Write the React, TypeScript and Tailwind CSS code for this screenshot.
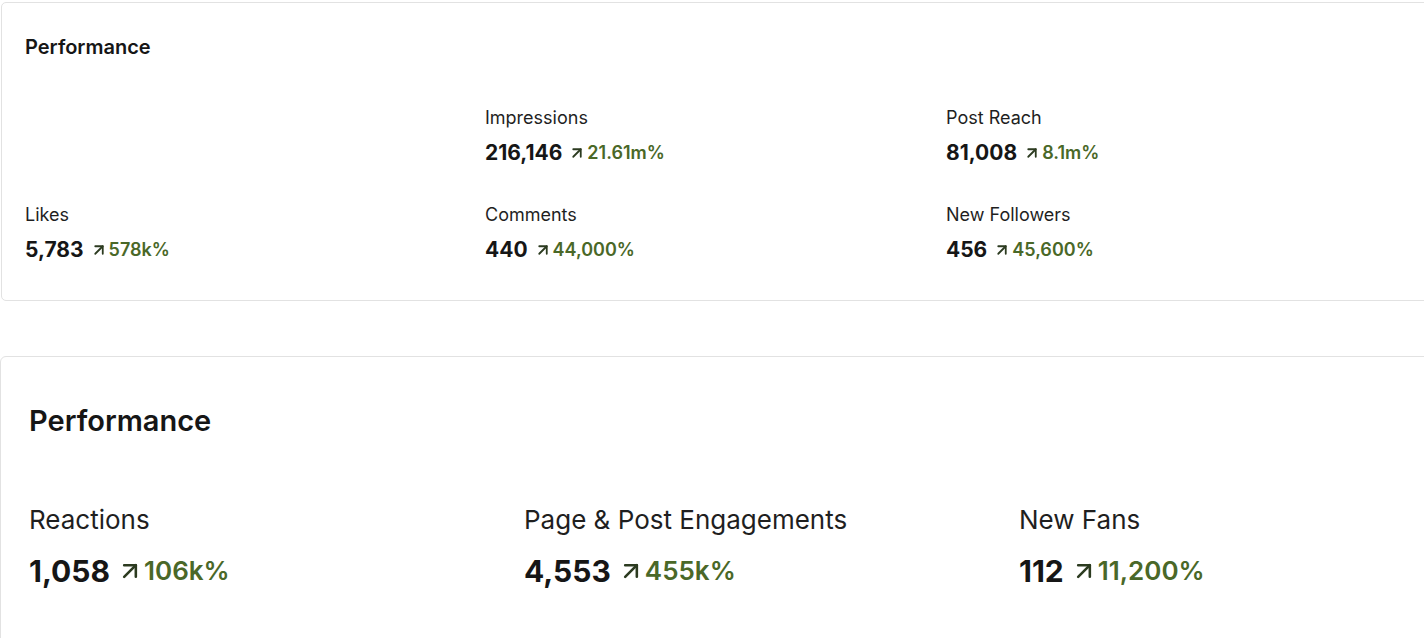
import { ArrowUpRight } from 'lucide-react'

type Metric = { label: string; value: string; change: string } | null

const topRows: Metric[][] = [
  [
    null,
    { label: 'Impressions', value: '216,146', change: '21.61m%' },
    { label: 'Post Reach', value: '81,008', change: '8.1m%' },
  ],
  [
    { label: 'Likes', value: '5,783', change: '578k%' },
    { label: 'Comments', value: '440', change: '44,000%' },
    { label: 'New Followers', value: '456', change: '45,600%' },
  ],
]

const bottomRow: Metric[] = [
  { label: 'Reactions', value: '1,058', change: '106k%' },
  { label: 'Page & Post Engagements', value: '4,553', change: '455k%' },
  { label: 'New Fans', value: '112', change: '11,200%' },
]

function SmallStat({ m }: { m: Metric }) {
  if (!m) return <div />
  return (
    <div className="flex flex-col gap-[9px]">
      <div className="text-[18px] leading-[24px] text-[#1f1f1f]">{m.label}</div>
      <div className="flex items-center h-[28px]">
        <span className="text-[21px] leading-[28px] font-bold text-[#161616]">{m.value}</span>
        <ArrowUpRight size={18} strokeWidth={2.4} className="ml-[6px] text-[#2c3b20]" />
        <span className="ml-[1px] text-[18px] leading-[28px] font-semibold text-[#4a6828]">{m.change}</span>
      </div>
    </div>
  )
}

function BigStat({ m }: { m: Metric }) {
  if (!m) return <div />
  return (
    <div className="flex flex-col gap-[17px]">
      <div className="text-[26px] leading-[32px] text-[#1f1f1f]">{m.label}</div>
      <div className="flex items-center h-[36px]">
        <span className="text-[30px] leading-[36px] font-bold text-[#161616]">{m.value}</span>
        <ArrowUpRight size={28} strokeWidth={2.2} className="ml-[6px] text-[#2c3b20]" />
        <span className="text-[26px] leading-[36px] font-semibold text-[#4a6828]">{m.change}</span>
      </div>
    </div>
  )
}

export default function App() {
  return (
    <div
      className="w-[1424px] h-[638px] overflow-hidden bg-white pt-[2px]"
      style={{ fontFamily: 'Inter, Roboto, "Noto Sans", sans-serif' }}
    >
      {/* 上方卡片 */}
      <section className="ml-[1px] w-[1460px] h-[299px] border border-[#e2e2e2] rounded-[5px] pl-[23px] pt-[30px]">
        <h2 className="text-[20px] leading-[28px] font-semibold text-[#161616]">Performance</h2>
        <div className="mt-[45px] flex flex-col gap-[36px]">
          {topRows.map((row, i) => (
            <div key={i} className="grid grid-cols-[460px_461px_1fr]">
              {row.map((m, j) => (
                <SmallStat key={j} m={m} />
              ))}
            </div>
          ))}
        </div>
      </section>

      {/* 下方卡片 */}
      <section className="mt-[55px] w-[1460px] h-[320px] border border-[#e2e2e2] rounded-[6px] pl-7 pt-[46px]">
        <h2 className="text-[29px] leading-[36px] font-semibold text-[#161616]">Performance</h2>
        <div className="mt-[65px] grid grid-cols-[495px_495px_1fr]">
          {bottomRow.map((m, j) => (
            <BigStat key={j} m={m} />
          ))}
        </div>
      </section>
    </div>
  )
}
